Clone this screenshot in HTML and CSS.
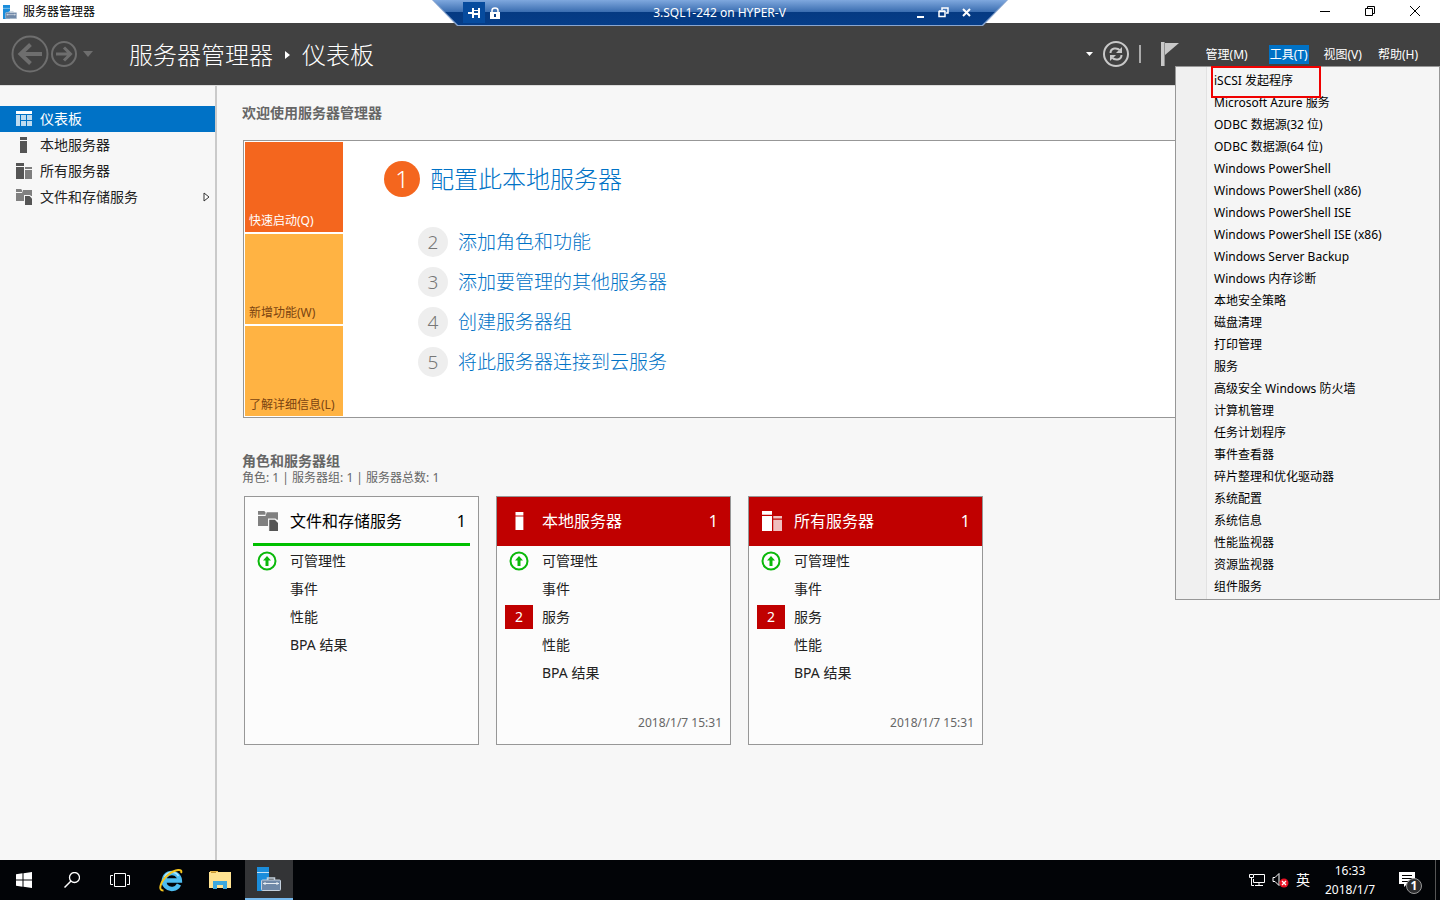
FILE: index.html
```html
<!DOCTYPE html>
<html lang="zh-CN">
<head>
<meta charset="utf-8">
<title>服务器管理器</title>
<link rel="stylesheet" href="styles.css">
</head>
<body>
<svg class="defs" aria-hidden="true">
  <symbol id="i-server" viewBox="0 0 16 16"><path d="M4 0h7v3H4zM4 4h7v12H4z" fill="currentColor"/></symbol>
  <symbol id="i-servers" viewBox="0 0 16 16"><path d="M0 0h8v3H0zM0 4h8v12H0z" fill="currentColor"/><path class="dim" d="M9 4h7v2H9zM9 7h7v9H9z"/></symbol>
  <symbol id="i-files" viewBox="0 0 16 16"><path d="M0 0h5l1 1v2H0zM7 1h9v6h-4L9 8v4H0V4h6z" fill="#808080"/><path d="M8 6h6l2 2v8H8z" fill="#f7f7f7"/><path d="M9 7h4.500L16 9.500V16H9z" fill="#555"/></symbol>
  <symbol id="i-up" viewBox="0 0 20 20"><circle cx="10" cy="10" r="8.500" fill="#fff" stroke="#0bb90b" stroke-width="2"/><path d="M10 5l4 4.500h-2.500V15h-3V9.500H6z" fill="#0bb90b"/></symbol>
  <symbol id="i-manager" viewBox="0 0 24 24"><path d="M0 0h12v24H0z" fill="#1b8ddb"/><path d="M0 5h12v1H0z" fill="#c5e2f5"/><path d="M10.500 13v-2h7v2" fill="none" stroke="#c4d0dc" stroke-width="1.500"/><rect x="4.500" y="13" width="19" height="10.500" rx="1" fill="#7089a8" stroke="#c4d0dc"/><path d="M6 16.500h16M8 15v3M20 15v3" stroke="#e8edf2" fill="none"/></symbol>
</svg>

<div class="desktop">
  <div class="titlebar">
    <svg class="app-icon" viewBox="0 0 24 24"><use href="#i-manager"/></svg>
    <span class="app-name">服务器管理器</span>
    <div class="window-buttons">
      <button aria-label="最小化"><svg width="12" height="12"><path d="M1 6.500h10" stroke="#000" fill="none"/></svg></button>
      <button aria-label="还原"><svg width="12" height="12"><path d="M1.500 3.500h7v7h-7zM3.500 3.500v-2h7v7h-2" stroke="#000" fill="none"/></svg></button>
      <button aria-label="关闭"><svg width="12" height="12"><path d="M1 1l10 10M11 1L1 11" stroke="#000" fill="none"/></svg></button>
    </div>
  </div>

  <div class="remote-bar">
    <div class="remote-inner">
      <button class="pin" aria-label="固定"><svg width="12" height="12"><path d="M0 5h5v2H0zM4 1h2v10H4zM6 3h4v5H6zM10 1h2v10h-2z" fill="#fff"/><path d="M6 4h4v2H6z" fill="#0a4a96"/></svg></button>
      <svg class="lock" width="10" height="12"><path d="M2 6V3.500Q2 1 5 1t3 2.500V6" stroke="#fff" stroke-width="1.500" fill="none"/><path d="M0 5h10v7H0z" fill="#fff"/><path d="M4 7h2v3H4z" fill="#0a3d85"/></svg>
      <span class="remote-title">3.SQL1-242 on HYPER-V</span>
      <button aria-label="最小化远程会话"><svg width="11" height="11"><path d="M2 9h7v2H2z" fill="#fff"/></svg></button>
      <button aria-label="还原远程会话"><svg width="11" height="11"><path d="M1 4.500h6v5H1zM1 4h6M4 3V1h6v5H8" stroke="#fff" stroke-width="1.500" fill="none"/></svg></button>
      <button aria-label="断开"><svg width="11" height="11"><path d="M2 2l7 7M9 2L2 9" stroke="#fff" stroke-width="2" fill="none"/></svg></button>
    </div>
  </div>

  <header class="header">
    <div class="history">
      <button aria-label="后退"><svg width="38" height="38"><circle cx="19" cy="19" r="17.500" fill="none" stroke="#6e6e6e" stroke-width="2"/><path d="M31 19H11M19.500 9.500L9.500 19l10 9.500" stroke="#6e6e6e" stroke-width="4" fill="none"/></svg></button>
      <button aria-label="前进"><svg width="26" height="26"><circle cx="13" cy="13" r="12" fill="none" stroke="#6e6e6e" stroke-width="2"/><path d="M5 13h13M13 6.500l6.500 6.500-6.500 6.500" stroke="#6e6e6e" stroke-width="3" fill="none"/></svg></button>
      <button class="history-more" aria-label="历史记录"><svg width="10" height="6"><path d="M0 0h10L5 6z" fill="#6e6e6e"/></svg></button>
    </div>
    <h1 class="crumbs"><span>服务器管理器</span><svg width="5" height="8"><path d="M0 0l5 4-5 4z" fill="#fff"/></svg><span>仪表板</span></h1>
    <div class="tools">
      <button aria-label="更多"><svg width="7" height="4"><path d="M0 0h7L3.500 4z" fill="#fff"/></svg></button>
      <button aria-label="刷新"><svg width="26" height="26"><circle cx="13" cy="13" r="12" fill="none" stroke="#c8c8c8" stroke-width="2"/><path d="M7.500 12c0-5 6.500-6 9.500-2.500M18.500 14c0 5-6.500 6-9.500 2.500" stroke="#c8c8c8" stroke-width="2" fill="none"/><path d="M19 6v6h-6l2-2h2V8zM7 20v-6h6l-2 2H9v2z" fill="#c8c8c8"/></svg></button>
      <span class="divider"></span>
      <button aria-label="通知"><svg width="18" height="24"><path d="M0 0h4v24H0z" fill="#c8c8c8"/><path d="M3.500 0v24" stroke="#8f8f8f"/><path d="M4 1h14L4 13z" fill="#c8c8c8"/></svg></button>
    </div>
    <nav class="menubar">
      <button>管理(M)</button>
      <button class="open" aria-expanded="true">工具(T)</button>
      <button>视图(V)</button>
      <button>帮助(H)</button>
    </nav>
    <div class="menu" role="menu">
      <button class="marked" role="menuitem">iSCSI 发起程序</button>
      <button role="menuitem">Microsoft Azure 服务</button>
      <button role="menuitem">ODBC 数据源(32 位)</button>
      <button role="menuitem">ODBC 数据源(64 位)</button>
      <button role="menuitem">Windows PowerShell</button>
      <button role="menuitem">Windows PowerShell (x86)</button>
      <button role="menuitem">Windows PowerShell ISE</button>
      <button role="menuitem">Windows PowerShell ISE (x86)</button>
      <button role="menuitem">Windows Server Backup</button>
      <button role="menuitem">Windows 内存诊断</button>
      <button role="menuitem">本地安全策略</button>
      <button role="menuitem">磁盘清理</button>
      <button role="menuitem">打印管理</button>
      <button role="menuitem">服务</button>
      <button role="menuitem">高级安全 Windows 防火墙</button>
      <button role="menuitem">计算机管理</button>
      <button role="menuitem">任务计划程序</button>
      <button role="menuitem">事件查看器</button>
      <button role="menuitem">碎片整理和优化驱动器</button>
      <button role="menuitem">系统配置</button>
      <button role="menuitem">系统信息</button>
      <button role="menuitem">性能监视器</button>
      <button role="menuitem">资源监视器</button>
      <button role="menuitem">组件服务</button>
    </div>
  </header>

  <div class="body">
    <nav class="sidebar">
      <a href="#" class="selected"><svg width="16" height="16"><path d="M0 0h16v3H0z" fill="#fff"/><path d="M0 4h4v11H0zM5 4h5v5H5zM11 4h5v5h-5zM5 10h5v5H5zM11 10h5v5h-5z" fill="#bfdcf0"/></svg>仪表板</a>
      <a href="#"><svg width="16" height="16"><use href="#i-server"/></svg>本地服务器</a>
      <a href="#"><svg width="16" height="16"><use href="#i-servers"/></svg>所有服务器</a>
      <a href="#"><svg width="16" height="16"><use href="#i-files"/></svg>文件和存储服务<svg class="expand" width="7" height="10"><path d="M1 1l5 4-5 4z" stroke="#333" fill="#fff"/></svg></a>
    </nav>

    <main class="content">
      <h2 class="section-title">欢迎使用服务器管理器</h2>
      <section class="welcome">
        <div class="tabs">
          <button class="active">快速启动(Q)</button>
          <button>新增功能(W)</button>
          <button>了解详细信息(L)</button>
        </div>
        <div class="steps">
          <a href="#" class="step first"><span class="num">1</span>配置此本地服务器</a>
          <a href="#" class="step"><span class="num">2</span>添加角色和功能</a>
          <a href="#" class="step"><span class="num">3</span>添加要管理的其他服务器</a>
          <a href="#" class="step"><span class="num">4</span>创建服务器组</a>
          <a href="#" class="step"><span class="num">5</span>将此服务器连接到云服务</a>
        </div>
      </section>

      <h2 class="section-title groups-title">角色和服务器组</h2>
      <p class="summary">角色: 1 | 服务器组: 1 | 服务器总数: 1</p>
      <div class="cards">
        <article class="card ok">
          <h3 class="card-head"><svg width="20" height="20"><use href="#i-files"/></svg><span class="name">文件和存储服务</span><span>1</span></h3>
          <ul>
            <li><span class="status"><svg width="20" height="20"><use href="#i-up"/></svg></span>可管理性</li>
            <li><span class="status"></span>事件</li>
            <li><span class="status"></span>性能</li>
            <li><span class="status"></span>BPA 结果</li>
          </ul>
        </article>
        <article class="card alert">
          <h3 class="card-head"><svg width="20" height="18"><use href="#i-server"/></svg><span class="name">本地服务器</span><span>1</span></h3>
          <ul>
            <li><span class="status"><svg width="20" height="20"><use href="#i-up"/></svg></span>可管理性</li>
            <li><span class="status"></span>事件</li>
            <li><span class="status count">2</span>服务</li>
            <li><span class="status"></span>性能</li>
            <li><span class="status"></span>BPA 结果</li>
          </ul>
          <time>2018/1/7 15:31</time>
        </article>
        <article class="card alert">
          <h3 class="card-head"><svg width="20" height="20"><use href="#i-servers"/></svg><span class="name">所有服务器</span><span>1</span></h3>
          <ul>
            <li><span class="status"><svg width="20" height="20"><use href="#i-up"/></svg></span>可管理性</li>
            <li><span class="status"></span>事件</li>
            <li><span class="status count">2</span>服务</li>
            <li><span class="status"></span>性能</li>
            <li><span class="status"></span>BPA 结果</li>
          </ul>
          <time>2018/1/7 15:31</time>
        </article>
      </div>
    </main>
  </div>

  <footer class="taskbar">
    <button aria-label="开始"><svg width="16" height="16"><path d="M0 2.200L6.500 1.300v6.200H0zM7.500 1.200L16 0v7.500H7.500zM0 8.500h6.500v6.200L0 13.800zM7.500 8.500H16V16l-8.500-1.200z" fill="#fff"/></svg></button>
    <button aria-label="搜索"><svg width="16" height="16"><circle cx="10.500" cy="5.500" r="5" fill="none" stroke="#fff" stroke-width="1.300"/><path d="M7 9L.5 15.500" stroke="#fff" stroke-width="1.500"/></svg></button>
    <button aria-label="任务视图"><svg width="20" height="14"><path d="M4.500.5h11v13h-11zM3 2.500H.5v9H3M17 2.500h2.500v9H17" fill="none" stroke="#fff"/></svg></button>
    <button class="app" aria-label="Internet Explorer"><svg width="24" height="24"><path d="M20 16.500A8 8 0 1 1 20.800 12.500H6" fill="none" stroke="#4dbdf0" stroke-width="4.500"/><path d="M5.500 9a8 8 0 0 1 14-1" fill="none" stroke="#b5e9fc" stroke-width="1.500"/><path d="M4.500 22.500C-1.500 23 1.500 13 9 7S24 .5 22 5" fill="none" stroke="#f5c41c" stroke-width="2"/></svg></button>
    <button class="app" aria-label="文件资源管理器"><svg width="22" height="18"><path d="M1 0h8v3H1z" fill="#e9b94b"/><path d="M0 1h22v16H0z" fill="#ffe391"/><path d="M1 0h8v1H1z" fill="#e9b94b"/><path d="M2 1h5v1H2z" fill="#c99a33"/><path d="M4 10h14v8h-4v-4H8v4H4z" fill="#3ba9e0"/></svg></button>
    <button class="app running" aria-label="服务器管理器"><svg width="24" height="24"><use href="#i-manager"/></svg></button>
    <div class="tray">
      <button aria-label="网络"><svg width="16" height="14"><path d="M5 1.500h10.500v8H4.500V6M10 9.500v3M6 12.500h8" fill="none" stroke="#fff"/><path d="M.5 1.500h4v3h-4zM2.500 4.500v8H5" fill="none" stroke="#fff"/></svg></button>
      <button aria-label="音量"><svg width="17" height="16"><path d="M1 5.500h2l4-4v12l-4-4H1z" fill="none" stroke="#fff"/><circle cx="12" cy="11" r="4.500" fill="#e81123"/><path d="M10 9l4 4M14 9l-4 4" stroke="#fff" stroke-width="1.300"/></svg></button>
      <button class="ime">英</button>
      <div class="clock"><span>16:33</span><span>2018/1/7</span></div>
      <button class="action" aria-label="操作中心"><svg width="16" height="16"><path d="M0 0h16v12H8l-3 3v-3H0z" fill="#fff"/><path d="M3 3.500h10M3 6.500h10M3 9.500h6" stroke="#000"/></svg><span class="badge">1</span></button>
      <button class="show-desktop" aria-label="显示桌面"></button>
    </div>
  </footer>
</div>
</body>
</html>
```
FILE: styles.css
```css
*, *::after { box-sizing: border-box; }

body {
  margin: 0;
  font: 12px/16px "Noto Sans", "Noto Sans CJK SC", sans-serif;
  color: #000;
}

button {
  margin: 0;
  padding: 0;
  border: 0;
  background: none;
  color: inherit;
  font: inherit;
}

a { color: inherit; text-decoration: none; }
h1, h2, h3, p, ul { margin: 0; padding: 0; font: inherit; }
ul { list-style: none; }
svg { display: block; flex: none; }
.defs { position: absolute; width: 0; height: 0; }
.dim { fill: currentColor; opacity: .75; }

.desktop {
  position: relative;
  display: flex;
  flex-direction: column;
  min-height: 100vh;
  background: #f7f7f7;
}

/* Window title bar */
.titlebar {
  display: flex;
  align-items: center;
  height: 23px;
  padding: 0 3px;
  gap: 6px;
  background: #fff;
}
.app-icon { width: 14px; height: 14px; }
.app-name { flex: 1; }
.window-buttons { display: flex; }
.window-buttons button {
  display: grid;
  place-items: center;
  width: 45px;
  height: 22px;
  padding-bottom: 2px;
}

/* Remote session bar */
.remote-bar {
  position: absolute;
  z-index: 2;
  top: 0;
  left: 50%;
  width: 576px;
  height: 26px;
  margin-left: -288px;
  background: #8aa6cf;
  clip-path: polygon(0 0, 100% 0, 551px 100%, 25px 100%);
}
.remote-inner {
  display: flex;
  align-items: center;
  height: 25px;
  padding: 0 30px 0 31px;
  background: linear-gradient(#7fa8de 0, #3a6db0 12px, #053a82 12px, #063d88 100%);
  color: #fff;
  clip-path: polygon(1px 0, 575px 0, 550px 100%, 26px 100%);
}
.remote-inner button { display: grid; place-items: center; width: 23px; height: 23px; }
.remote-inner .pin { width: 22px; height: 21px; background: #064b9e; }
.lock { margin-left: 5px; }
.remote-title { flex: 1; padding-left: 30px; text-align: center; }

/* Header */
.header {
  position: relative;
  display: flex;
  align-items: center;
  height: 62px;
  padding: 0 21px 0 11px;
  background: #414141;
  color: #fff;
}
.history { display: flex; align-items: center; gap: 2px; width: 118px; }
.history-more { margin-left: 4px; }
.crumbs {
  display: flex;
  flex: 1;
  align-items: center;
  gap: 12px;
  padding-top: 2px;
  font-size: 24px;
  font-weight: 300;
  line-height: 32px;
}
.tools { display: flex; align-items: center; gap: 10px; padding-right: 26px; }
.tools .divider { width: 2px; height: 18px; background: #aaa; }
.tools button:last-child { margin-left: 10px; }
.menubar { display: flex; gap: 14px; }
.menubar button { padding: 1px 1px 0; line-height: 18px; }
.menubar .open { margin-left: 6px; background: #0072c6; }

.menu {
  position: absolute;
  z-index: 1;
  top: 43px;
  right: 0;
  width: 265px;
  padding: 3px 2px 1px;
  border: 1px solid #979797;
  background: linear-gradient(90deg, #f0f0f0 30px, #e2e2e2 30px, #e2e2e2 31px, #f5f5f5 31px);
  color: #000;
}
.menu button {
  display: block;
  width: 100%;
  height: 22px;
  padding: 0 0 0 36px;
  line-height: 22px;
  text-align: left;
}
.menu .marked { position: relative; }
.menu .marked::after {
  content: "";
  position: absolute;
  top: -4px;
  left: 33px;
  width: 110px;
  height: 32px;
  border: 2px solid #f00000;
}

/* Body */
.body { display: flex; flex: 1; border-top: 1px solid #dcdcdc; }
.sidebar {
  width: 217px;
  padding-top: 20px;
  border-right: 2px solid #cacaca;
  color: #222;
  font-size: 14px;
  line-height: 26px;
}
.sidebar a { display: flex; align-items: center; gap: 8px; padding: 0 5px 0 16px; }
.sidebar svg { color: #555; }
.sidebar .selected { background: #0072c6; color: #fff; }
.sidebar .expand { margin-left: auto; }

.content { flex: 1; min-width: 0; padding: 17px 24px 24px 25px; }
.section-title { color: #666; font-size: 14px; font-weight: 700; line-height: 20px; }

.welcome {
  display: flex;
  margin: 17px 0 0 1px;
  padding: 1px;
  border: 1px solid #979797;
  background: #fff;
}
.tabs { display: grid; gap: 2px; width: 98px; }
.tabs button {
  display: flex;
  align-items: flex-end;
  height: 90px;
  padding: 0 0 3px 4px;
  background: #ffb343;
  color: #7a4311;
}
.tabs .active { background: #f4661e; color: #fff; }
.steps { display: flex; flex-direction: column; gap: 10px; padding: 19px 0 0 75px; }
.step {
  display: flex;
  align-items: center;
  gap: 10px;
  color: #0072c6;
  font-size: 19px;
  font-weight: 300;
  line-height: 30px;
}
.num {
  display: grid;
  place-items: center;
  width: 30px;
  height: 30px;
  border-radius: 50%;
  background: #eee;
  color: #777;
}
.first { margin: 0 0 20px -34px; font-size: 24px; line-height: 36px; }
.first .num { width: 36px; height: 36px; background: #f4661e; color: #fff; }

.groups-title { margin-top: 33px; }
.summary { margin-top: -1px; color: #666; line-height: 16px; }

.cards { display: flex; gap: 17px; margin: 10px 0 0 2px; }
.card {
  display: flex;
  flex-direction: column;
  width: 235px;
  min-height: 249px;
  border: 1px solid #979797;
  background: #fcfcfc;
}
.card-head {
  display: flex;
  align-items: center;
  gap: 12px;
  height: 49px;
  padding: 0 12px 1px 13px;
  font-size: 16px;
}
.card-head .name { flex: 1; }
.ok .card-head { margin: 0 8px; padding: 2px 4px 0 5px; border-bottom: 3px solid #00c000; }
.alert .card-head { background: #c00000; color: #fff; }
.card ul { padding-top: 1px; color: #222; font-size: 14px; line-height: 28px; }
.card li { display: flex; align-items: center; gap: 9px; height: 28px; padding-left: 8px; }
.status { display: grid; place-items: center; width: 28px; height: 24px; line-height: 24px; }
.count { background: #c00000; color: #fff; }
.card time { margin-top: auto; padding: 0 8px 13px 0; color: #666; text-align: right; }

/* Taskbar */
.taskbar { display: flex; height: 40px; background: #020407; color: #fff; }
.taskbar > button { display: grid; place-items: center; width: 48px; }
.taskbar .app { margin-left: 1px; }
.taskbar > button:nth-child(4) { margin-left: 3px; }
.taskbar .running { background: #333436; border-bottom: 2px solid #76b9ed; }
.tray { display: flex; align-items: center; gap: 7px; margin-left: auto; }
.ime { font-size: 14px; }
.clock { display: flex; flex-direction: column; width: 66px; line-height: 19px; text-align: center; }
.action { position: relative; margin-left: 9px; }
.badge {
  position: absolute;
  top: 6px;
  left: 7px;
  width: 16px;
  height: 16px;
  border: 1px solid #999;
  border-radius: 50%;
  background: #2b2c2e;
  font-weight: 700;
  line-height: 14px;
}
.show-desktop { width: 5px; height: 40px; margin-left: 13px; border-left: 1px solid #555; }
```
